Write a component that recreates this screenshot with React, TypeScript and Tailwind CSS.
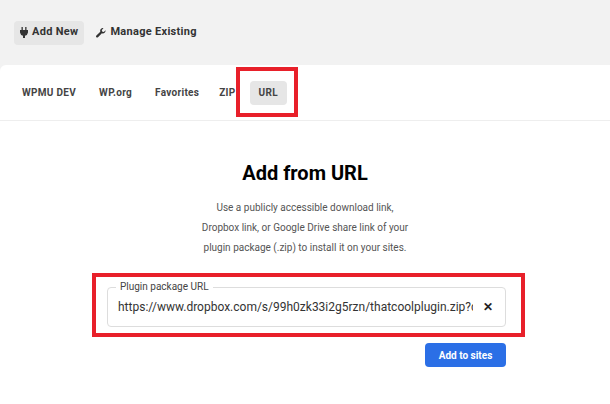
import React from "react";

export default function App() {
  return (
    <div className="w-[610px] h-[404px] bg-[#f2f2f2] overflow-hidden" style={{ fontFamily: "Roboto, 'Liberation Sans', sans-serif" }}>
      <div className="h-[65px] flex items-center pl-[14px] gap-[8px]">
        <div className="h-[24px] px-[6px] rounded-[4px] bg-[#e6e6e6] flex items-center gap-[4px] text-[11px] font-bold tracking-[0.3px] text-[#333]">
          <svg width="8" height="11" viewBox="0 0 8 11" fill="#333"><rect x="1.5" y="0" width="1.3" height="3"/><rect x="5.2" y="0" width="1.3" height="3"/><path d="M0 3h8v2.5a4 4 0 0 1-3 3.3V11H3V8.8A4 4 0 0 1 0 5.5z"/></svg>
          Add New
        </div>
        <div className="h-[24px] px-[4px] flex items-center gap-[4px] text-[11px] font-bold tracking-[0.3px] text-[#333]">
          <svg width="10" height="10" viewBox="0 0 10 10" fill="#333"><path d="M9.5 2.2L7.8 3.9 6.1 3.6 5.8 1.9 7.5.2A2.7 2.7 0 0 0 4.3 3.7L.4 7.6a1.1 1.1 0 0 0 1.6 1.6L5.9 5.3A2.7 2.7 0 0 0 9.5 2.2z"/></svg>
          Manage Existing
        </div>
      </div>
      <div className="bg-white h-[339px] rounded-tl-[6px] relative">
        <div className="h-[56px] border-b border-[#eeeeee] flex items-center pl-[22px] text-[10px] font-bold tracking-[0.3px] text-[#444]">
          <span className="mr-[23px]">WPMU DEV</span>
          <span className="mr-[23px]">WP.org</span>
          <span className="mr-[20px]">Favorites</span>
          <span className="mr-[14px]">ZIP</span>
          <span className="relative h-[24px] px-[9px] rounded-[4px] bg-[#e6e6e6] flex items-center">URL
            <span className="absolute left-[-14px] top-[-14px] w-[62px] h-[50px] border-[4px] border-[#e8202a]" />
          </span>
        </div>
        <div className="flex flex-col items-center">
          <h1 className="mt-[38px] text-[20px] font-bold text-black leading-[28px]">Add from URL</h1>
          <p className="mt-[11px] w-[216px] text-center text-[10px] leading-[20px] text-[#555]">Use a publicly accessible download link, Dropbox link, or Google Drive share link of your plugin package (.zip) to install it on your sites.</p>
        </div>
        <div className="relative ml-[107px] mt-[29px] w-[399px] h-[40px] border border-[#dddddd] rounded-[4px] flex items-center pl-[10px] pr-[12px]">
          <span className="absolute left-[8px] top-[-7px] bg-white px-[4px] text-[10px] leading-[12px] text-[#444]">Plugin package URL</span>
          <span className="flex-1 min-w-0 text-[12px] text-[#333] whitespace-nowrap overflow-hidden">https://www.dropbox.com/s/99h0zk33i2g5rzn/thatcoolplugin.zip?d</span>
          <span className="text-[12px] font-bold text-[#222] ml-[10px]">✕</span>
          <span className="absolute left-[-16px] top-[-15px] w-[433px] h-[64px] border-[4px] border-[#e8202a]" />
        </div>
        <div className="flex justify-end w-[506px] mt-[16px]">
          <button className="h-[24px] w-[81px] rounded-[4px] bg-[#2b6fe6] text-white text-[10px] font-bold">Add to sites</button>
        </div>
      </div>
    </div>
  );
}
